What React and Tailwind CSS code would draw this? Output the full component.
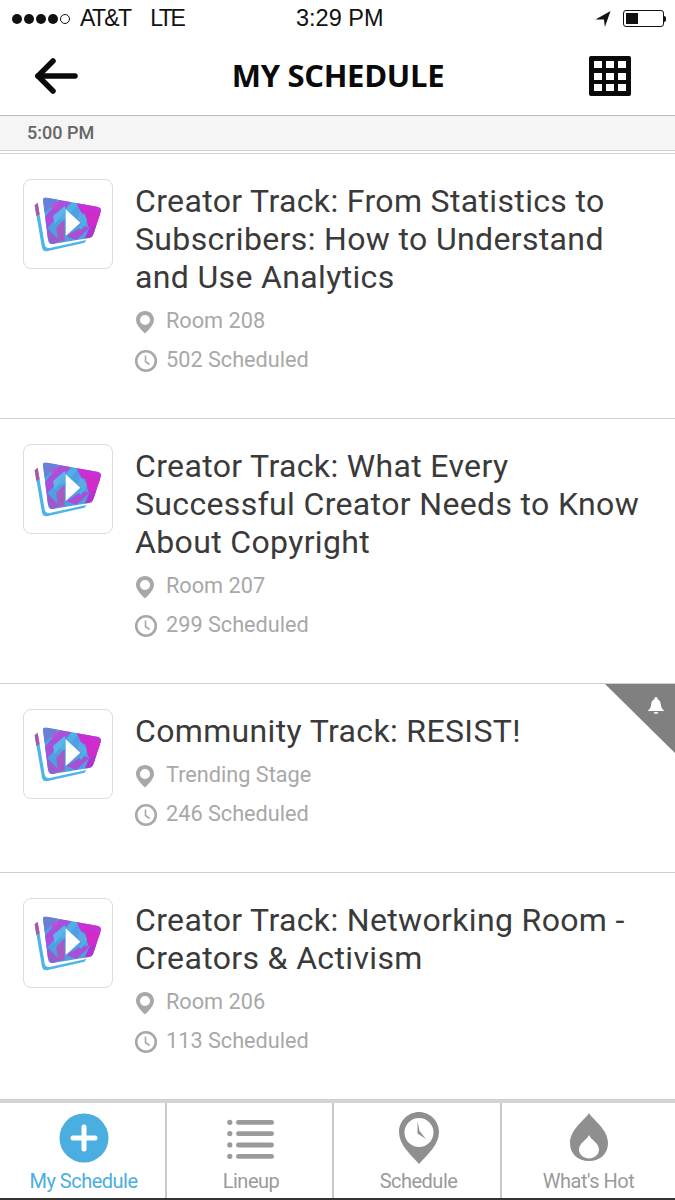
// App.jsx - My Schedule screen
import React from 'react';

const sessions = [
  { title: ['Creator Track: From Statistics to', 'Subscribers: How to Understand', 'and Use Analytics'], room: 'Room 208', count: '502 Scheduled', height: 'h-[265px]' },
  { title: ['Creator Track: What Every', 'Successful Creator Needs to Know', 'About Copyright'], room: 'Room 207', count: '299 Scheduled', height: 'h-[265px]' },
  { title: ['Community Track: RESIST!'], room: 'Trending Stage', count: '246 Scheduled', height: 'h-[189px]', alert: true },
  { title: ['Creator Track: Networking Room -', 'Creators & Activism'], room: 'Room 206', count: '113 Scheduled', height: 'h-[227px]' },
];

// --- Icons ---
const BODY = 'M100 92 Q100 83 112 85 L262 112 Q277 115 273 128 L250 198 Q248 205 238 206 L130 224 Q117 226 115 212 Z';

const LogoIcon = () => (
  <svg width="70" height="56" viewBox="70 80 210 168">
    <defs>
      <clipPath id="logo-body"><path d={BODY} /></clipPath>
    </defs>
    <path d="M75 108 L84 100 L105 225 Q107 238 120 236 L230 212 L225 220 L115 245 Q100 248 97 235 Z" fill="#4fb4e8" />
    <path d="M75 108 L84 100 L90 135 L80 140 Z" fill="#b0559f" />
    <path d={BODY} fill="#4f9fe3" />
    <g clipPath="url(#logo-body)">
      <path d="M100 85 L150 85 L100 135 Z" fill="#6a7fd8" />
      <path d="M150 92 L185 98 L105 185 L100 150 Z" fill="#a84fdc" />
      <path d="M112 175 L150 215 L125 228 L110 200 Z" fill="#9a5ad0" />
      <path d="M130 140 L165 110 L170 125 L135 165 Z" fill="#5cb4e8" />
      <path d="M200 100 L280 112 L270 150 L215 130 Z" fill="#c92fd4" />
      <path d="M225 125 L275 135 L255 195 L235 170 Z" fill="#d02ac8" />
      <path d="M210 125 L232 150 L225 170 L205 150 Z" fill="#5fa8e6" />
      <path d="M170 200 L220 170 L240 175 L200 212 Z" fill="#a94fd6" />
      <path d="M140 175 L165 150 L165 215 L145 218 Z" fill="#a65ac4" />
      <path d="M185 100 L205 104 L165 150 L150 150 Z" fill="#4fb0e8" />
      <path d="M238 178 L262 165 L250 206 L225 208 Z" fill="#b234d0" />
      <path d="M125 110 L140 95 L145 105 L128 125 Z" fill="#c24fd0" />
      <path d="M208 175 L226 150 L232 158 L214 182 Z" fill="#44b4e4" />
    </g>
    <path d="M168 120 L212 160 L168 200 Z" fill="#ffffff" />
  </svg>
);

const PinIcon = () => (
  <svg width="20" height="24" viewBox="0 0 20 24">
    <path fillRule="evenodd" d="M10 1 C4.8 1 1 5 1 9.8 C1 14.5 6 20 10 23.5 C14 20 19 14.5 19 9.8 C19 5 15.2 1 10 1 Z M10 5 A5 5 0 1 1 10 15 A5 5 0 1 1 10 5 Z" fill="#a8a8a8" />
  </svg>
);

const ClockIcon = () => (
  <svg width="24" height="24" viewBox="0 0 24 24" fill="none" stroke="#a8a8a8">
    <circle cx="12" cy="12" r="9.8" strokeWidth="2.6" />
    <path d="M11.5 6.5 V12.5 L15.5 15.5" strokeWidth="1.6" />
  </svg>
);

const BellIcon = () => (
  <svg width="20" height="20" viewBox="0 0 20 20" fill="#ffffff">
    <circle cx="10" cy="2.6" r="1.6" />
    <path d="M10 3 C6.5 3 5.5 5.5 5.2 8.5 C5 11 4 13 1.5 15 H18.5 C16 13 15 11 14.8 8.5 C14.5 5.5 13.5 3 10 3 Z" />
    <path d="M7.8 16 H12.2 A2.2 2 0 0 1 7.8 16 Z" />
  </svg>
);

const SessionCard = ({ title, room, count, height, alert }) => (
  <div className={`relative flex border-b border-[#cfcfcf] pl-[23px] pt-[25px] ${height}`}>
    <div className="flex h-[90px] w-[90px] shrink-0 items-center justify-center rounded-lg border border-[#dcdcdc] bg-white">
      <LogoIcon />
    </div>
    <div className="ml-[22px] flex flex-col pt-[3px]">
      <div className="text-[32px] leading-[38px] tracking-[0.35px] text-[#3a3a3a]">
        {title.map((line) => (
          <div key={line} className="whitespace-nowrap">{line}</div>
        ))}
      </div>
      <div className="mt-[6px] flex h-[39px] items-center text-[21.7px] text-[#a8a8a8]">
        <span className="flex w-[31px] justify-start"><PinIcon /></span>
        {room}
      </div>
      <div className="flex h-[39px] items-center text-[21.7px] text-[#a8a8a8]">
        <span className="flex w-[31px] justify-start -ml-[1px] mr-[1px]"><ClockIcon /></span>
        {count}
      </div>
    </div>
    {alert && (
      <div className="absolute right-0 top-0 h-[69px] w-[70px] bg-[#808080] [clip-path:polygon(0_0,100%_0,100%_100%)]">
        <div className="absolute right-[9px] top-[12px]"><BellIcon /></div>
      </div>
    )}
  </div>
);

const TabItem = ({ label, active, children, className }) => (
  <div className={`flex flex-col items-center pt-[9px] ${className}`}>
    <div className="flex h-[52px] items-center justify-center">{children}</div>
    <div className={`mt-[4px] text-[20px] leading-[26px] tracking-[-0.5px] ${active ? 'text-[#4aaee0]' : 'text-[#9a9a9a]'}`}>{label}</div>
  </div>
);

export default function App() {
  return (
    <div className="flex h-[1200px] w-[675px] flex-col overflow-hidden bg-white font-['Roboto',sans-serif]">
      {/* status bar */}
      <div className="relative flex h-[37px] shrink-0 items-center font-['Liberation_Sans',sans-serif] text-[23px] text-[#111]">
        <div className="ml-[12px] flex items-center gap-[2px]">
          <span className="h-[10px] w-[10px] rounded-full bg-[#111]" />
          <span className="h-[10px] w-[10px] rounded-full bg-[#111]" />
          <span className="h-[10px] w-[10px] rounded-full bg-[#111]" />
          <span className="h-[10px] w-[10px] rounded-full bg-[#111]" />
          <span className="h-[10px] w-[10px] rounded-full border border-[#111]" />
        </div>
        <span className="ml-[10px] tracking-[-1.7px]">AT&amp;T</span>
        <span className="ml-[20px] tracking-[-2.5px]">LTE</span>
        <span className="absolute left-[296px] top-[3px] text-[23.5px] leading-[30px]">3:29 PM</span>
        <div className="ml-auto mr-[9px] flex items-center gap-[12px]">
          <svg width="16" height="16" viewBox="0 0 16 17"><path d="M0 9 L16 0 L10 17 L9 9 Z" fill="#111" /></svg>
          <div className="flex items-center">
            <div className="h-[17px] w-[41px] rounded-[3px] border border-[#111] p-[2px]">
              <div className="h-full w-[12px] bg-[#111]" />
            </div>
            <div className="h-[6px] w-[2px] rounded-r bg-[#111]" />
          </div>
        </div>
      </div>

      {/* header */}
      <div className="flex h-[79px] shrink-0 items-center justify-between border-b border-[#bdbdbd] pl-[34px] pr-[44px]">
        <svg width="44" height="36" viewBox="0 0 44 36" fill="none" stroke="#0a0a0a" strokeWidth="5.5" strokeLinecap="round" strokeLinejoin="round">
          <path d="M19 3 L4 18 L19 33" />
          <path d="M4 18 H41" />
        </svg>
        <div className="mb-[2px] ml-[9px] font-['Open_Sans',sans-serif] text-[31px] font-bold tracking-[-0.3px] text-[#0a0a0a]">MY SCHEDULE</div>
        <svg width="42" height="40" viewBox="0 0 42 40">
          <rect width="42" height="40" rx="2" fill="#0a0a0a" />
          {[5, 17, 29].map((x) => [5, 17, 28].map((y) => (
            <rect key={`${x}-${y}`} x={x} y={y} width="8" height="7" fill="#ffffff" />
          )))}
        </svg>
      </div>

      {/* time band */}
      <div className="flex h-[35px] shrink-0 items-center border-b border-[#cfcfcf] bg-[#f5f5f5] pb-[2px] pl-[27px] text-[18px] font-medium text-[#666]">5:00 PM</div>
      <div className="h-[3px] shrink-0 border-b border-[#d4d4d4]" />

      {/* list */}
      <div className="min-h-0 flex-1">
        {sessions.map((s) => (
          <SessionCard key={s.room} {...s} />
        ))}
      </div>

      {/* tab bar */}
      <div className="flex h-[100px] shrink-0 border-t-[3px] border-b-[2px] border-t-[#d4d4d4] border-b-[#333]">
        <TabItem label="My Schedule" active className="w-[167px] border-r-2 border-[#c8c8c8] pl-[2px]">
          <svg width="50" height="50" viewBox="0 0 50 50">
            <circle cx="25" cy="25" r="24.5" fill="#4aaee0" />
            <path d="M25 14 V36 M14 25 H36" stroke="#ffffff" strokeWidth="5" strokeLinecap="round" />
          </svg>
        </TabItem>
        <TabItem label="Lineup" className="w-[167px] border-r-2 border-[#c8c8c8] pl-[3px]">
          <svg width="48" height="42" viewBox="0 0 48 42" fill="#9a9a9a">
            {[3, 14.3, 25.6, 37].map((y) => (
              <g key={y}>
                <circle cx="2.8" cy={y + 2.3} r="2.6" />
                <rect x="9" y={y} width="38" height="4.8" rx="2.4" />
              </g>
            ))}
          </svg>
        </TabItem>
        <TabItem label="Schedule" className="w-[168px] border-r-2 border-[#c8c8c8] pl-[3px]">
          <svg width="40" height="52" viewBox="0 0 40 52">
            <path fillRule="evenodd" d="M20 0 C9 0 0 9 0 20 C0 33 12 43 20 52 C28 43 40 33 40 20 C40 9 31 0 20 0 Z M20 6 A14.5 14.5 0 1 1 20 35 A14.5 14.5 0 1 1 20 6 Z" fill="#8f8f8f" />
            <path d="M18.5 9 L20.5 19 L27 27 L18.5 21.5 Z" fill="#8f8f8f" />
          </svg>
        </TabItem>
        <TabItem label="What's Hot" className="flex-1">
          <svg width="38" height="52" viewBox="0 0 38 52">
            <path fillRule="evenodd" d="M19 1 C16 7 0 17 0 31 C0 42 8 49 19 49 C30 49 38 42 38 31 C38 17 22 7 19 1 Z M19 23 C21 28 29 31 29 37.5 C29 43 24 46.5 19 46.5 C14 46.5 9 43 9 37.5 C9 31 17 28 19 23 Z" fill="#8f8f8f" />
          </svg>
        </TabItem>
      </div>
    </div>
  );
}
